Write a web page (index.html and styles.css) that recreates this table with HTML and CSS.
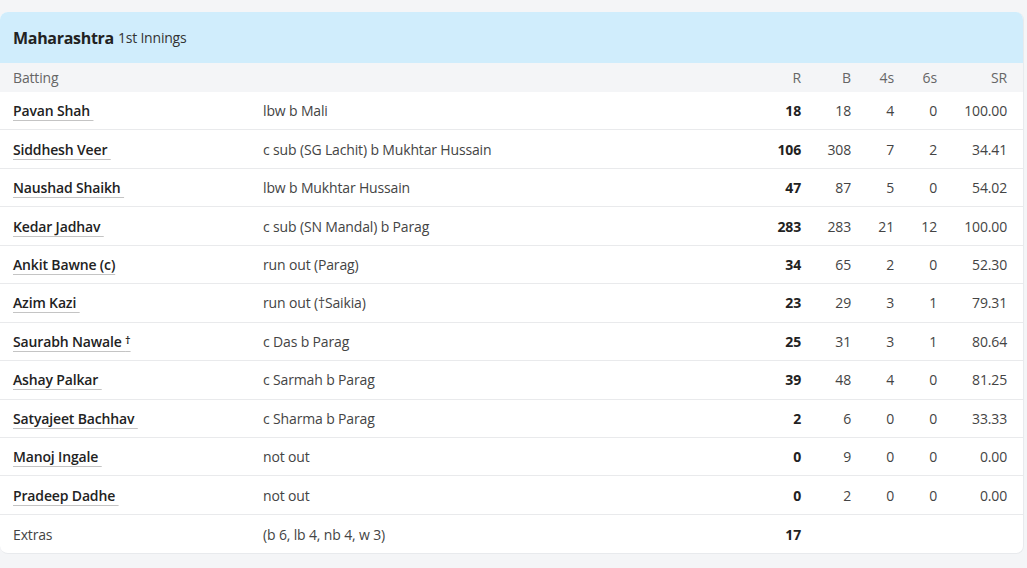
FILE: index.html
```html
<!DOCTYPE html>
<html>
<head>
<meta charset="utf-8">
<link rel="stylesheet" href="styles.css">
</head>
<body>
<div class="card">
  <div class="card-head"><span class="team">Maharashtra</span> <span class="inn">1st Innings</span></div>
  <div class="row hdr">
    <div class="c-name">Batting</div>
    <div class="c-dis"></div>
    <div class="c-r">R</div>
    <div class="c-b">B</div>
    <div class="c-4">4s</div>
    <div class="c-6">6s</div>
    <div class="c-sr">SR</div>
  </div>
  <div class="row"><div class="c-name"><a class="pl">Pavan Shah&nbsp;</a></div><div class="c-dis">lbw b Mali</div><div class="c-r">18</div><div class="c-b">18</div><div class="c-4">4</div><div class="c-6">0</div><div class="c-sr">100.00</div></div>
  <div class="row"><div class="c-name"><a class="pl">Siddhesh Veer&nbsp;</a></div><div class="c-dis">c sub (SG Lachit) b Mukhtar Hussain</div><div class="c-r">106</div><div class="c-b">308</div><div class="c-4">7</div><div class="c-6">2</div><div class="c-sr">34.41</div></div>
  <div class="row"><div class="c-name"><a class="pl">Naushad Shaikh&nbsp;</a></div><div class="c-dis">lbw b Mukhtar Hussain</div><div class="c-r">47</div><div class="c-b">87</div><div class="c-4">5</div><div class="c-6">0</div><div class="c-sr">54.02</div></div>
  <div class="row"><div class="c-name"><a class="pl">Kedar Jadhav&nbsp;</a></div><div class="c-dis">c sub (SN Mandal) b Parag</div><div class="c-r">283</div><div class="c-b">283</div><div class="c-4">21</div><div class="c-6">12</div><div class="c-sr">100.00</div></div>
  <div class="row"><div class="c-name"><a class="pl">Ankit Bawne (c)</a></div><div class="c-dis">run out (Parag)</div><div class="c-r">34</div><div class="c-b">65</div><div class="c-4">2</div><div class="c-6">0</div><div class="c-sr">52.30</div></div>
  <div class="row"><div class="c-name"><a class="pl">Azim Kazi&nbsp;</a></div><div class="c-dis">run out (†Saikia)</div><div class="c-r">23</div><div class="c-b">29</div><div class="c-4">3</div><div class="c-6">1</div><div class="c-sr">79.31</div></div>
  <div class="row"><div class="c-name"><a class="pl">Saurabh Nawale <span class="wk">†</span></a></div><div class="c-dis">c Das b Parag</div><div class="c-r">25</div><div class="c-b">31</div><div class="c-4">3</div><div class="c-6">1</div><div class="c-sr">80.64</div></div>
  <div class="row"><div class="c-name"><a class="pl">Ashay Palkar&nbsp;</a></div><div class="c-dis">c Sarmah b Parag</div><div class="c-r">39</div><div class="c-b">48</div><div class="c-4">4</div><div class="c-6">0</div><div class="c-sr">81.25</div></div>
  <div class="row"><div class="c-name"><a class="pl">Satyajeet Bachhav&nbsp;</a></div><div class="c-dis">c Sharma b Parag</div><div class="c-r">2</div><div class="c-b">6</div><div class="c-4">0</div><div class="c-6">0</div><div class="c-sr">33.33</div></div>
  <div class="row"><div class="c-name"><a class="pl">Manoj Ingale&nbsp;</a></div><div class="c-dis">not out</div><div class="c-r">0</div><div class="c-b">9</div><div class="c-4">0</div><div class="c-6">0</div><div class="c-sr">0.00</div></div>
  <div class="row"><div class="c-name"><a class="pl">Pradeep Dadhe&nbsp;</a></div><div class="c-dis">not out</div><div class="c-r">0</div><div class="c-b">2</div><div class="c-4">0</div><div class="c-6">0</div><div class="c-sr">0.00</div></div>
  <div class="row extras"><div class="c-name">Extras</div><div class="c-dis">(b 6, lb 4, nb 4, w 3)</div><div class="c-r">17</div><div class="c-b"></div><div class="c-4"></div><div class="c-6"></div><div class="c-sr"></div></div>
</div>
</body>
</html>
```

FILE: styles.css
```css
* { box-sizing: border-box; }
html, body { margin: 0; padding: 0; }
body {
  background: #f4f5f7;
  font-family: "Open Sans", "Noto Sans", sans-serif;
  font-size: 14px;
  color: #333;
  padding-top: 12px;
  padding-right: 3px;
}
.card {
  background: #fff;
  border-radius: 8px;
  border-right: 1px solid #e8eaed;
  border-bottom: 1px solid #e8eaed;
  overflow: hidden;
}
.card-head {
  background: #d0edfc;
  height: 51px;
  display: flex;
  align-items: center;
  padding-left: 13px;
  gap: 4px;
}
.team { font-weight: 700; font-size: 16px; color: #222; letter-spacing: -0.3px; }
.inn { font-size: 14px; color: #333; letter-spacing: -0.2px; }
.row {
  display: grid;
  grid-template-columns: 250px 1fr 60px 50px 43px 43px 70px;
  align-items: center;
  height: 38.45px;
  padding: 0 16px 0 13px;
  border-bottom: 1px solid #e9eaec;
  color: #444;
  letter-spacing: -0.15px;
}
.row.hdr {
  height: 29px;
  background: #f4f5f7;
  color: #666;
  border-bottom: none;
}
.row.extras { border-bottom: none; }
.c-r, .c-b, .c-4, .c-6, .c-sr { text-align: right; }
.row .c-r { font-weight: 700; color: #222; }
.row.hdr .c-r { font-weight: 400; color: #666; }
.pl {
  font-weight: 600;
  color: #222;
  text-decoration: underline;
  text-decoration-color: #c4c4c4;
  text-underline-offset: 4px;
  text-decoration-thickness: 1px;
}
.wk { font-size: 11px; vertical-align: 3px; }
```
